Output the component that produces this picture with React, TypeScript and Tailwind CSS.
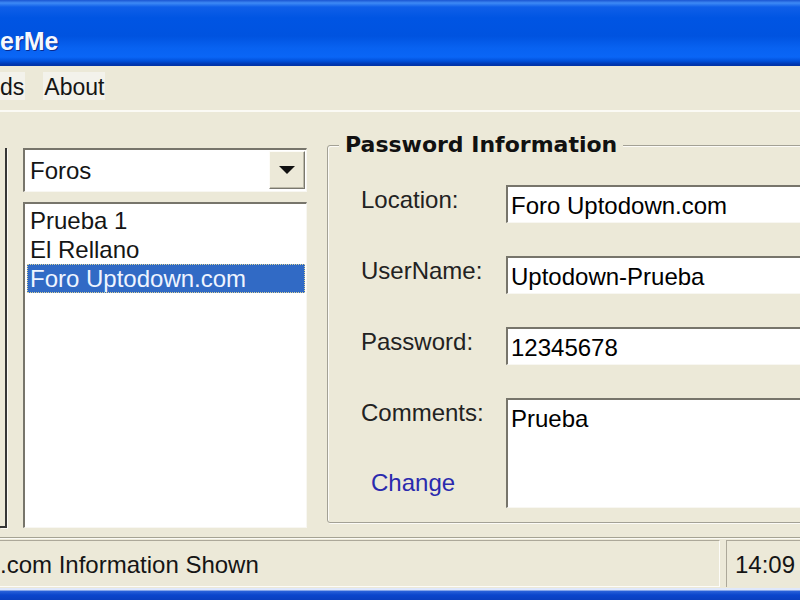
const sans = "font-['Liberation_Sans',Arial,sans-serif]";

// sunken XP-classic edit frame
const sunken =
  "border-t-2 border-l-2 border-b border-r border-t-[#77756b] border-l-[#77756b] border-b-[#f8f7f2] border-r-[#f8f7f2] bg-white";

const fields = [
  { label: "Location:", value: "Foro Uptodown.com" },
  { label: "UserName:", value: "Uptodown-Prueba" },
  { label: "Password:", value: "12345678" },
];

const entries = ["Prueba 1", "El Rellano", "Foro Uptodown.com"];

export default function App() {
  return (
    <div className={`flex h-[600px] w-[800px] flex-col overflow-hidden bg-[#ece9d8] text-[24px] text-[#151515] ${sans}`}>
      {/* title bar */}
      <div className="h-[66px] shrink-0 bg-[linear-gradient(to_bottom,#1a55d2_0px,#3e8af5_3px,#0f5fe8_7px,#0055e3_18px,#0053e0_36px,#0862f1_48px,#0a66f6_57px,#0050da_61px,#0038b2_64px,#0033a6_66px)] pt-[29px]">
        <span className="block text-[25px] leading-[25px] font-bold text-[#f4f8ff] [text-shadow:1px_1px_0_#0b2a8c]">
          erMe
        </span>
      </div>

      {/* menu bar */}
      <div className="flex h-[46px] shrink-0 items-start border-b-2 border-[#fbfaf5] pt-[6px] text-[23px] leading-[23px]">
        <span className="h-[28px] bg-[#f3f2eb] pt-[4px] pr-[1px]">ds</span>
        <span className="ml-[18px] h-[28px] bg-[#f3f2eb] px-[1px] pt-[4px]">About</span>
      </div>

      {/* client area */}
      <div className="flex flex-1 items-start pt-[33px]">
        <div className="mt-[3px] h-[380px] w-[7px] shrink-0 border-r-2 border-b-2 border-[#363636] shadow-[1px_1px_0_#fbfaf4]" />

        <div className="mt-[3px] ml-[16px] flex w-[284px] shrink-0 flex-col">
          <div className={`flex h-[44px] items-start ${sunken}`}>
            <span className="flex-1 pt-[9px] pl-[5px] leading-[24px]">Foros</span>
            <div className="mt-[1px] mr-[1px] flex h-[38px] w-[36px] items-center justify-center border border-t-[#fdfcf8] border-l-[#fdfcf8] border-r-[#7a786e] border-b-[#7a786e] bg-[#ece9d8] shadow-[inset_-1px_-1px_0_#bcb9a8]">
              <svg width="16" height="8" viewBox="0 0 16 8">
                <path d="M0 0 H16 L8 8 Z" fill="#111" />
              </svg>
            </div>
          </div>

          <div className={`mt-[10px] h-[326px] pt-[2px] pr-[1px] pl-[2px] ${sunken}`}>
            {entries.map((e, i) => (
              <div
                key={e}
                className={
                  i === 2
                    ? "h-[29px] bg-[#316ac5] pl-[3px] leading-[29px] text-[#eef4ff] outline-1 -outline-offset-1 outline-[#d9d39a] outline-dotted"
                    : "h-[29px] pl-[3px] leading-[29px]"
                }
              >
                {e}
              </div>
            ))}
          </div>
        </div>

        {/* group box */}
        <div className="relative ml-[20px] -mr-[30px] h-[378px] flex-1 rounded-[3px] border border-[#a3a195] pl-[33px] shadow-[inset_1px_1px_0_#fcfbf7,1px_1px_0_#fcfbf7]">
          <span className="absolute -top-[12px] left-[11px] bg-[#ece9d8] px-[6px] font-['DejaVu_Sans',Verdana,sans-serif] text-[22px] leading-[22px] font-bold text-[#111]">
            Password Information
          </span>

          {fields.map((f, i) => (
            <div key={f.label} className={i === 0 ? "mt-[39px] flex" : "mt-[33px] flex"}>
              <div className="w-[145px] shrink-0 pt-[3px] leading-[24px] text-[#222]">{f.label}</div>
              <div className={`h-[38px] flex-1 pt-[7px] pl-[3px] leading-[24px] text-black ${sunken}`}>{f.value}</div>
            </div>
          ))}

          <div className="mt-[33px] flex">
            <div className="flex w-[145px] shrink-0 flex-col pt-[3px] leading-[24px]">
              <span className="text-[#222]">Comments:</span>
              <span className="mt-[46px] ml-[10px] text-[#2a2aae]">Change</span>
            </div>
            <div className={`h-[110px] flex-1 pt-[7px] pl-[3px] leading-[24px] text-black ${sunken}`}>Prueba</div>
          </div>
        </div>
      </div>

      {/* status bar */}
      <div className="flex h-[51px] shrink-0 border-t border-[#a5a393] pt-[2px] shadow-[inset_0_1px_0_#fbfaf4]">
        <div className="flex h-[47px] w-[720px] items-center border-r border-b border-r-[#fdfcf8] border-b-[#fdfcf8] border-t border-t-[#aca899] pt-[2px] leading-[24px]">
          .com Information Shown
        </div>
        <div className="ml-[6px] flex h-[47px] flex-1 items-center border-t border-l border-t-[#aca899] border-l-[#aca899] pt-[2px] pl-[8px] leading-[24px]">
          14:09
        </div>
      </div>

      {/* window frame bottom */}
      <div className="h-[12px] shrink-0 bg-[linear-gradient(to_bottom,#dfe8fb_0px,#dfe8fb_2px,#2a62da_3px,#0b46cc_7px,#0a3fbf_12px)]" />
    </div>
  );
}
